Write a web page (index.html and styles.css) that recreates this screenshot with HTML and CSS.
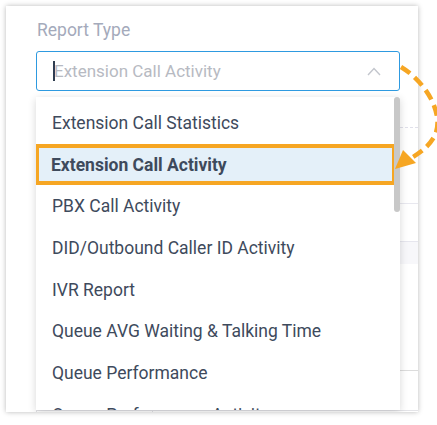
FILE: index.html
```html
<!DOCTYPE html>
<html>
<head>
<meta charset="utf-8">
<link rel="stylesheet" href="styles.css">
</head>
<body>
<div class="card">
  <div class="label">Report Type</div>
  <div class="field">
    <div class="select">
      <span class="caret"></span><span class="placeholder">Extension Call Activity</span>
      <svg class="chev" width="14" height="9" viewBox="0 0 14 9"><polyline points="1,8 7,1.5 13,8" fill="none" stroke="#c3c6cd" stroke-width="1.4"/></svg>
    </div>
    <div class="behind">
      <div class="b-dash"></div>
      <div class="b-row"></div>
      <div class="b-head"></div>
      <div class="b-body"></div>
      <div class="b-cells"><div class="b-cell"></div><div class="b-cell wide"></div></div>
    </div>
    <ul class="dropdown">
      <li class="item">Extension Call Statistics</li>
      <li class="item active">Extension Call Activity</li>
      <li class="item">PBX Call Activity</li>
      <li class="item">DID/Outbound Caller ID Activity</li>
      <li class="item">IVR Report</li>
      <li class="item">Queue AVG Waiting &amp; Talking Time</li>
      <li class="item">Queue Performance</li>
      <li class="item">Queue Performance Activity</li>
      <li class="thumb"></li>
    </ul>
  </div>
</div>
<svg class="annot" width="437" height="425" viewBox="0 0 437 425">
  <path d="M401,67 C429,84 445,118 434,137 C428,147 421,152 413,157" fill="none" stroke="#f6a623" stroke-width="4.5" stroke-dasharray="11 6"/>
  <polygon points="395,169 403,150 416,163" fill="#f6a623"/>
</svg>
</body>
</html>
```
FILE: styles.css
```css
html, body {
  margin: 0;
  padding: 0;
  background: #ffffff;
  font-family: Roboto, "Liberation Sans", sans-serif;
}

.card {
  margin: 6px;
  width: 412px;
  height: 406px;
  box-sizing: border-box;
  padding: 14px 18px 0 30px;
  background: #ffffff;
  box-shadow: 0 0 5px rgba(0, 0, 0, 0.28);
  overflow: hidden;
}

.label {
  font-size: 17.5px;
  line-height: 21px;
  color: #a4aabb;
  padding-left: 1px;
}

.field {
  position: relative;
  margin-top: 10px;
}

.select {
  height: 40px;
  box-sizing: border-box;
  border: 1px solid #2e9ae0;
  border-radius: 3px;
  display: flex;
  align-items: center;
  padding: 0 16px;
  font-size: 17px;
}

.caret {
  display: inline-block;
  width: 2px;
  height: 20px;
  background: #2f3d4f;
  margin-right: -1px;
}

.placeholder {
  color: #b7bac2;
  flex: 1;
}

.chev {
  display: block;
  margin-right: 2px;
}

.behind {
  margin-right: -18px;
}

.b-dash {
  margin-top: 36px;
  border-top: 1px dashed #e0e0ea;
}

.b-row {
  margin-top: 75px;
  height: 37px;
  border-top: 1px solid #e8e8ef;
}

.b-head {
  height: 22px;
  background: #f7f7fa;
  border-top: 1px solid #e6e6ee;
}

.b-body {
  height: 106px;
  border-bottom: 1px solid #dcdcdc;
}

.b-cells {
  margin-top: 39px;
  display: flex;
  height: 10px;
  border-top: 1px solid #e4e4e8;
}

.b-cell {
  width: 115px;
  border-left: 1px solid #e0e0e4;
}

.b-cell.wide {
  flex: 1;
}

.dropdown {
  position: absolute;
  top: 46px;
  left: 0;
  width: 364px;
  height: 313px;
  margin: 0;
  padding: 5px 0 0;
  list-style: none;
  background: #ffffff;
  box-shadow: 0 2px 8px rgba(0, 0, 0, 0.16);
  overflow: hidden;
  box-sizing: border-box;
}

.item {
  height: 41.7px;
  box-sizing: border-box;
  margin-right: 5px;
  padding-left: 16px;
  display: flex;
  align-items: center;
  font-size: 17.5px;
  color: #3e4a5c;
  white-space: nowrap;
}

.item.active {
  border: 4px solid #f6a623;
  background: #e4f0f9;
  padding-left: 12px;
  font-weight: 700;
  margin-left: -1px;
  margin-right: 4px;
}

.thumb {
  position: absolute;
  top: 0;
  right: 0;
  width: 6px;
  height: 115px;
  border-radius: 3px;
  background: #c8c8c8;
}

.annot {
  position: absolute;
  left: 0;
  top: 0;
  pointer-events: none;
}
```
